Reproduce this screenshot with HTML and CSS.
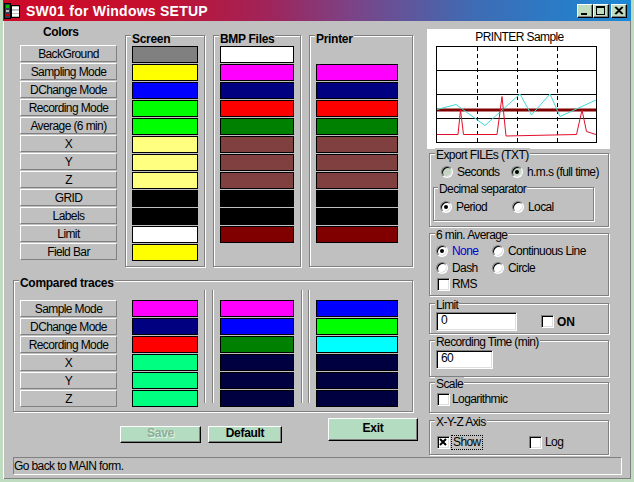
FILE: index.html
```html
<!DOCTYPE html>
<html>
<head>
<meta charset="utf-8">
<title>SW01 for Windows SETUP</title>
<link rel="stylesheet" href="styles.css">
</head>
<body>
<div class="window">
  <div class="titlebar">
    <svg class="appicon" width="16" height="16" viewBox="0 0 16 16">
      <rect x="0.5" y="0.5" width="6" height="15" fill="#383858" stroke="#000"/>
      <rect x="2" y="2" width="3" height="3" fill="#00c000"/>
      <rect x="2" y="7" width="3" height="2" fill="#c0c0c0"/>
      <rect x="2" y="11" width="3" height="2" fill="#c00000"/>
      <rect x="7.5" y="2.5" width="8" height="12" fill="#c0c0c0" stroke="#000"/>
      <rect x="8" y="4" width="7" height="2" fill="#fff"/>
      <rect x="8" y="8" width="7" height="2" fill="#fff"/>
      <rect x="8" y="11" width="7" height="2" fill="#fff"/>
    </svg>
    <span class="title">SW01 for Windows SETUP</span>
    <div class="tbtns">
      <span class="tbtn"><svg width="14" height="12" viewBox="0 0 14 12"><rect x="3" y="8" width="6" height="2" fill="#000"/></svg></span>
      <span class="tbtn"><svg width="14" height="12" viewBox="0 0 14 12"><rect x="2.5" y="1.5" width="8" height="8" fill="none" stroke="#000"/><rect x="2" y="1" width="9" height="2" fill="#000"/></svg></span>
      <span class="tbtn tclose"><svg width="14" height="12" viewBox="0 0 14 12"><path d="M3 2 L10 9 M4 2 L11 9 M10 2 L3 9 M11 2 L4 9" stroke="#000" stroke-width="1.2" fill="none"/></svg></span>
    </div>
  </div>

  <div class="client">
    <div class="main">
      <div class="leftpane">
        <div class="toprow">
          <div class="colors">
            <div class="colors-title">Colors</div>
            <div class="btncol">
              <div class="lbtn">BackGround</div>
              <div class="lbtn">Sampling Mode</div>
              <div class="lbtn">DChange Mode</div>
              <div class="lbtn">Recording Mode</div>
              <div class="lbtn">Average (6 min)</div>
              <div class="lbtn">X</div>
              <div class="lbtn">Y</div>
              <div class="lbtn">Z</div>
              <div class="lbtn">GRID</div>
              <div class="lbtn">Labels</div>
              <div class="lbtn">Limit</div>
              <div class="lbtn">Field Bar</div>
            </div>
          </div>

          <div class="group topgroup g-screen">
            <span class="legend lb">Screen</span>
            <div class="swcol w66">
              <div class="sw c-gray"></div>
              <div class="sw c-yellow"></div>
              <div class="sw c-blue"></div>
              <div class="sw c-lime"></div>
              <div class="sw c-lime"></div>
              <div class="sw c-lyellow"></div>
              <div class="sw c-lyellow"></div>
              <div class="sw c-lyellow"></div>
              <div class="sw c-black"></div>
              <div class="sw c-black"></div>
              <div class="sw c-white"></div>
              <div class="sw c-yellow"></div>
            </div>
          </div>

          <div class="group topgroup g-bmp">
            <span class="legend lb">BMP Files</span>
            <div class="swcol w74">
              <div class="sw c-white"></div>
              <div class="sw c-magenta"></div>
              <div class="sw c-navy"></div>
              <div class="sw c-red"></div>
              <div class="sw c-green"></div>
              <div class="sw c-brown"></div>
              <div class="sw c-brown"></div>
              <div class="sw c-brown"></div>
              <div class="sw c-black"></div>
              <div class="sw c-black"></div>
              <div class="sw c-maroon"></div>
            </div>
          </div>

          <div class="group topgroup g-printer">
            <span class="legend lb">Printer</span>
            <div class="swcol w82">
              <div class="sw-empty"></div>
              <div class="sw c-magenta"></div>
              <div class="sw c-navy"></div>
              <div class="sw c-red"></div>
              <div class="sw c-green"></div>
              <div class="sw c-brown"></div>
              <div class="sw c-brown"></div>
              <div class="sw c-brown"></div>
              <div class="sw c-black"></div>
              <div class="sw c-black"></div>
              <div class="sw c-maroon"></div>
            </div>
          </div>
        </div>

        <div class="group compared">
          <span class="legend lb lc">Compared traces</span>
          <div class="btncol">
            <div class="lbtn">Sample Mode</div>
            <div class="lbtn">DChange Mode</div>
            <div class="lbtn">Recording Mode</div>
            <div class="lbtn">X</div>
            <div class="lbtn">Y</div>
            <div class="lbtn">Z</div>
          </div>
          <div class="swcol w66 cc1">
            <div class="sw c-magenta"></div>
            <div class="sw c-navy"></div>
            <div class="sw c-red"></div>
            <div class="sw c-spring"></div>
            <div class="sw c-spring"></div>
            <div class="sw c-spring"></div>
          </div>
          <div class="vsep s1"></div>
          <div class="vsep s2"></div>
          <div class="swcol w74 cc2">
            <div class="sw c-magenta"></div>
            <div class="sw c-blue"></div>
            <div class="sw c-green"></div>
            <div class="sw c-dnavy"></div>
            <div class="sw c-dnavy"></div>
            <div class="sw c-dnavy"></div>
          </div>
          <div class="vsep s3"></div>
          <div class="vsep s4"></div>
          <div class="swcol w82 cc3">
            <div class="sw c-blue"></div>
            <div class="sw c-lime"></div>
            <div class="sw c-cyan"></div>
            <div class="sw c-dnavy"></div>
            <div class="sw c-dnavy"></div>
            <div class="sw c-dnavy"></div>
          </div>
        </div>

        <div class="actions">
          <div class="gbtn save">Save</div>
          <div class="gbtn default">Default</div>
          <div class="gbtn exit">Exit</div>
        </div>
      </div>

      <div class="rightpane">
        <div class="sample">
          <div class="sample-title">PRINTER Sample</div>
          <svg class="plot" width="161" height="97" viewBox="0 0 161 97">
            <rect x="0.5" y="0.5" width="160" height="96" fill="#fff" stroke="#000"/>
            <path d="M0 24.5 H161 M0 48.5 H161 M0 72.5 H161" stroke="#000" stroke-width="1"/>
            <path d="M41.5 1 V96 M81.5 1 V96 M121.5 1 V96" stroke="#000" stroke-width="1" stroke-dasharray="4 3"/>
            <path d="M1 64 H160" stroke="#800000" stroke-width="3"/>
            <polyline points="1,63.5 20,58.5 49,79.5 84,48 95.5,69 114,48 124,70.5 160,54" fill="none" stroke="#40dcd8" stroke-width="1"/>
            <polyline points="1,88.5 22,88.5 24.5,64 27.5,88.5 61,88.5 66,50.5 70,90 140.5,88.5 146,64 150.5,85.5 160,88.5" fill="none" stroke="#e0102c" stroke-width="1"/>
          </svg>
        </div>

        <div class="group rgroup g-export">
          <span class="legend">Export FILEs (TXT)</span>
          <div class="row exp-row">
            <div class="opt w70"><span class="radio dim"></span><span>Seconds</span></div>
            <div class="opt"><span class="radio dim on"></span><span>h.m.s (full time)</span></div>
          </div>
          <div class="group g-dec">
            <span class="legend ld">Decimal separator</span>
            <div class="row dec-row">
              <div class="opt w72"><span class="radio on"></span><span>Period</span></div>
              <div class="opt"><span class="radio"></span><span>Local</span></div>
            </div>
          </div>
        </div>

        <div class="group rgroup g-avg">
          <span class="legend">6 min. Average</span>
          <div class="row avg-row1">
            <div class="opt w56"><span class="radio on"></span><span class="blue">None</span></div>
            <div class="opt"><span class="radio"></span><span>Continuous Line</span></div>
          </div>
          <div class="row avg-row2">
            <div class="opt w56"><span class="radio"></span><span>Dash</span></div>
            <div class="opt"><span class="radio"></span><span>Circle</span></div>
          </div>
          <div class="row avg-row3">
            <div class="opt g2"><span class="check"></span><span>RMS</span></div>
          </div>
        </div>

        <div class="group rgroup g-limit">
          <span class="legend">Limit</span>
          <div class="row limit-row">
            <div class="tinput w81">0</div>
            <div class="opt on-opt g3"><span class="check"></span><span class="bold">ON</span></div>
          </div>
        </div>

        <div class="group rgroup g-rec">
          <span class="legend">Recording Time (min)</span>
          <div class="tinput w57 rec-input">60</div>
        </div>

        <div class="group rgroup g-scale">
          <span class="legend">Scale</span>
          <div class="row scale-row">
            <div class="opt g2"><span class="check"></span><span>Logarithmic</span></div>
          </div>
        </div>

        <div class="group rgroup g-xyz">
          <span class="legend">X-Y-Z Axis</span>
          <div class="row xyz-row">
            <div class="opt g1 w92"><span class="check"><svg width="11" height="11" viewBox="0 0 11 11"><path d="M2 2 L8 8 M8 2 L2 8" stroke="#000" stroke-width="2"/></svg></span><span class="focus">Show</span></div>
            <div class="opt g3"><span class="check"></span><span>Log</span></div>
          </div>
        </div>
      </div>
    </div>

    <div class="status">Go back to MAIN form.</div>
  </div>
</div>
</body>
</html>
```

FILE: styles.css
```css
* { box-sizing: border-box; }
html, body { margin: 0; padding: 0; }
body {
  width: 634px;
  height: 482px;
  overflow: hidden;
  font-family: "Liberation Sans", Arial, sans-serif;
  font-size: 12px;
  line-height: 14px;
  letter-spacing: -0.6px;
  color: #000;
  background: #c0dcc0;
}

.window {
  width: 634px;
  height: 482px;
  background: #c0dcc0;
  padding: 0 3px 3px 3px;
  display: flex;
  flex-direction: column;
}

/* ---------- title bar ---------- */
.titlebar {
  height: 21px;
  flex: none;
  display: flex;
  align-items: center;
  padding-left: 1px;
  background: linear-gradient(to right, #cc0a28 0%, #c4102e 24%, #a0245a 42%, #7a4488 56%, #3e6cb4 75%, #1a88d6 100%);
}
.appicon { flex: none; margin-right: 6px; }
.title {
  color: #fff;
  font-weight: bold;
  font-size: 14px;
  letter-spacing: 0.25px;
  white-space: nowrap;
}
.tbtns { margin-left: auto; margin-right: 4px; display: flex; }
.tbtn {
  width: 16px;
  height: 14px;
  background: #c0dcc0;
  border: 1px solid;
  border-color: #fff #000 #000 #fff;
  box-shadow: inset -1px -1px 0 #808080;
  display: flex;
  align-items: center;
  justify-content: center;
}
.tclose { margin-left: 2px; }

/* ---------- client ---------- */
.client {
  flex: 1;
  background: #c0c0c0;
  display: flex;
  flex-direction: column;
  box-shadow: inset 1px 0 0 #fff, inset -1px -1px 0 #808080;
}
.main { display: flex; padding: 4px 0 0 10px; }
.leftpane { width: 414px; flex: none; }

.toprow { display: flex; align-items: flex-start; padding-left: 7px; }
.colors { width: 97px; flex: none; }
.colors-title {
  font-weight: bold;
  letter-spacing: -0.4px;
  padding-left: 23px;
  height: 20px;
}
.btncol { display: flex; flex-direction: column; gap: 1px; width: 97px; flex: none; }
.lbtn {
  height: 17px;
  border: 1px solid;
  border-color: #fff #808080 #808080 #fff;
  text-align: center;
  padding-top: 1px;
  white-space: nowrap;
}

/* ---------- group boxes ---------- */
.group {
  position: relative;
  border: 1px solid #808080;
  box-shadow: inset 1px 1px 0 #fff, 1px 1px 0 #fff;
}
.legend {
  position: absolute;
  left: 5px;
  top: -6px;
  padding: 0 1px;
  background: #c0c0c0;
  white-space: nowrap;
  line-height: 14px;
}
.lb { font-weight: bold; letter-spacing: -0.3px; top: -4px; }
.lc { top: -5px; }
.ld { left: 4px; }

.topgroup { margin-top: 10px; margin-left: 8px; height: 232px; padding: 10px 0 0 6px; }
.g-screen { width: 80px; }
.g-bmp { width: 88px; }
.g-printer { width: 104px; }

.swcol { display: flex; flex-direction: column; gap: 1px; flex: none; }
.w66 { width: 66px; }
.w74 { width: 74px; }
.w82 { width: 82px; }
.sw { height: 17px; border: 1px solid #000; }
.sw-empty { height: 17px; }

.c-gray { background: #808080; }
.c-yellow { background: #ffff00; }
.c-blue { background: #0000ff; }
.c-lime { background: #00ff00; }
.c-lyellow { background: #ffff80; }
.c-black { background: #000000; }
.c-white { background: #ffffff; }
.c-magenta { background: #ff00ff; }
.c-navy { background: #000080; }
.c-red { background: #ff0000; }
.c-green { background: #008000; }
.c-brown { background: #804040; }
.c-maroon { background: #800000; }
.c-spring { background: #00ff80; }
.c-dnavy { background: #000040; }
.c-cyan { background: #00ffff; }

.compared {
  width: 400px;
  height: 132px;
  margin-top: 13px;
  padding: 19px 0 0 6px;
  display: flex;
  align-items: flex-start;
}
.cc1 { margin-left: 15px; }
.vsep {
  width: 2px;
  height: 113px;
  margin-top: -10px;
  border-left: 1px solid #808080;
  border-right: 1px solid #fff;
  flex: none;
}
.s1 { margin-left: 6px; }
.s2 { margin-left: 6px; }
.cc2 { margin-left: 6px; }
.s3 { margin-left: 7px; }
.s4 { margin-left: 5px; }
.cc3 { margin-left: 6px; }

/* ---------- bottom buttons ---------- */
.actions { display: flex; align-items: flex-start; margin-top: 6px; padding-left: 107px; }
.gbtn {
  background: #b4dcc0;
  border: 1px solid;
  border-color: #fff #000 #000 #fff;
  box-shadow: inset -1px -1px 0 #808080;
  font-weight: bold;
  letter-spacing: -0.3px;
  text-align: center;
  flex: none;
}
.save { width: 81px; height: 17px; margin-top: 8px; line-height: 13px; color: #8cae98; text-shadow: 1px 1px 0 #e4f4e8; }
.default { width: 74px; height: 17px; margin-top: 8px; margin-left: 7px; line-height: 13px; }
.exit { width: 90px; height: 23px; margin-left: 46px; padding-top: 2px; }

/* ---------- right pane ---------- */
.rightpane { width: 183px; flex: none; margin-top: 4px; display: flex; flex-direction: column; }
.sample { background: #fff; height: 120px; padding-top: 1px; }
.sample-title { text-align: center; padding-left: 2px; }
.plot { display: block; margin: 2px 0 0 9px; }

.rgroup { margin-left: 2px; width: 180px; flex: none; }
.row { display: flex; align-items: center; height: 14px; }
.opt { display: flex; align-items: center; gap: 4px; flex: none; white-space: nowrap; }
.g1 { gap: 1px; }
.g2 { gap: 2px; }
.g3 { gap: 3px; }
.w56 { width: 56px; }
.w70 { width: 70px; }
.w72 { width: 72px; }
.w92 { width: 92px; }

.radio {
  width: 12px;
  height: 12px;
  flex: none;
  position: relative;
  border-radius: 50%;
  background: #fff;
  border: 1px solid;
  border-color: #808080 #fff #fff #808080;
  box-shadow: inset 1px 1px 0 #000, inset -1px -1px 0 #dfdfdf;
}
.radio.dim { background: #c4d4c4; }
.radio.on::after {
  content: "";
  position: absolute;
  left: 3px;
  top: 3px;
  width: 4px;
  height: 4px;
  border-radius: 50%;
  background: #000;
}
.check {
  width: 13px;
  height: 13px;
  flex: none;
  background: #fff;
  border: 1px solid;
  border-color: #808080 #fff #fff #808080;
  box-shadow: inset 1px 1px 0 #000, inset -1px -1px 0 #dfdfdf;
  display: flex;
  align-items: center;
  justify-content: center;
}
.check svg { display: block; }
.blue { color: #0000d0; }
.bold { font-weight: bold; letter-spacing: -0.2px; }
.focus { border: 1px dotted #000; padding: 0 1px; line-height: 13px; }

.tinput {
  height: 19px;
  background: #fff;
  border: 1px solid;
  border-color: #808080 #fff #fff #808080;
  box-shadow: inset 1px 1px 0 #000, inset -1px -1px 0 #dfdfdf;
  padding: 0 0 0 4px;
  flex: none;
}
.w81 { width: 81px; }
.w57 { width: 57px; }

.g-export { margin-top: 4px; height: 74px; }
.exp-row { margin: 11px 0 0 11px; }
.g-dec { width: 161px; height: 34px; margin: 8px 0 0 3px; }
.dec-row { margin: 12px 0 0 6px; }

.g-avg { margin-top: 6px; height: 63px; }
.avg-row1 { margin: 10px 0 0 6px; }
.avg-row2 { margin: 3px 0 0 6px; }
.avg-row3 { margin: 2px 0 0 7px; }

.g-limit { margin-top: 7px; height: 31px; }
.limit-row { margin: 7px 0 0 6px; height: 21px; }
.on-opt { margin-left: 24px; }

.g-rec { margin-top: 6px; height: 37px; }
.rec-input { margin: 9px 0 0 6px; }

.g-scale { margin-top: 5px; height: 31px; }
.scale-row { margin: 9px 0 0 7px; }

.g-xyz { margin-top: 7px; height: 35px; }
.xyz-row { margin: 14px 0 0 7px; }

/* ---------- status bar ---------- */
.status {
  margin: 2px 0 0 10px;
  width: 609px;
  height: 18px;
  border: 1px solid;
  border-color: #808080 #fff #fff #808080;
  padding: 1px 0 0 0;
  white-space: nowrap;
}
```
